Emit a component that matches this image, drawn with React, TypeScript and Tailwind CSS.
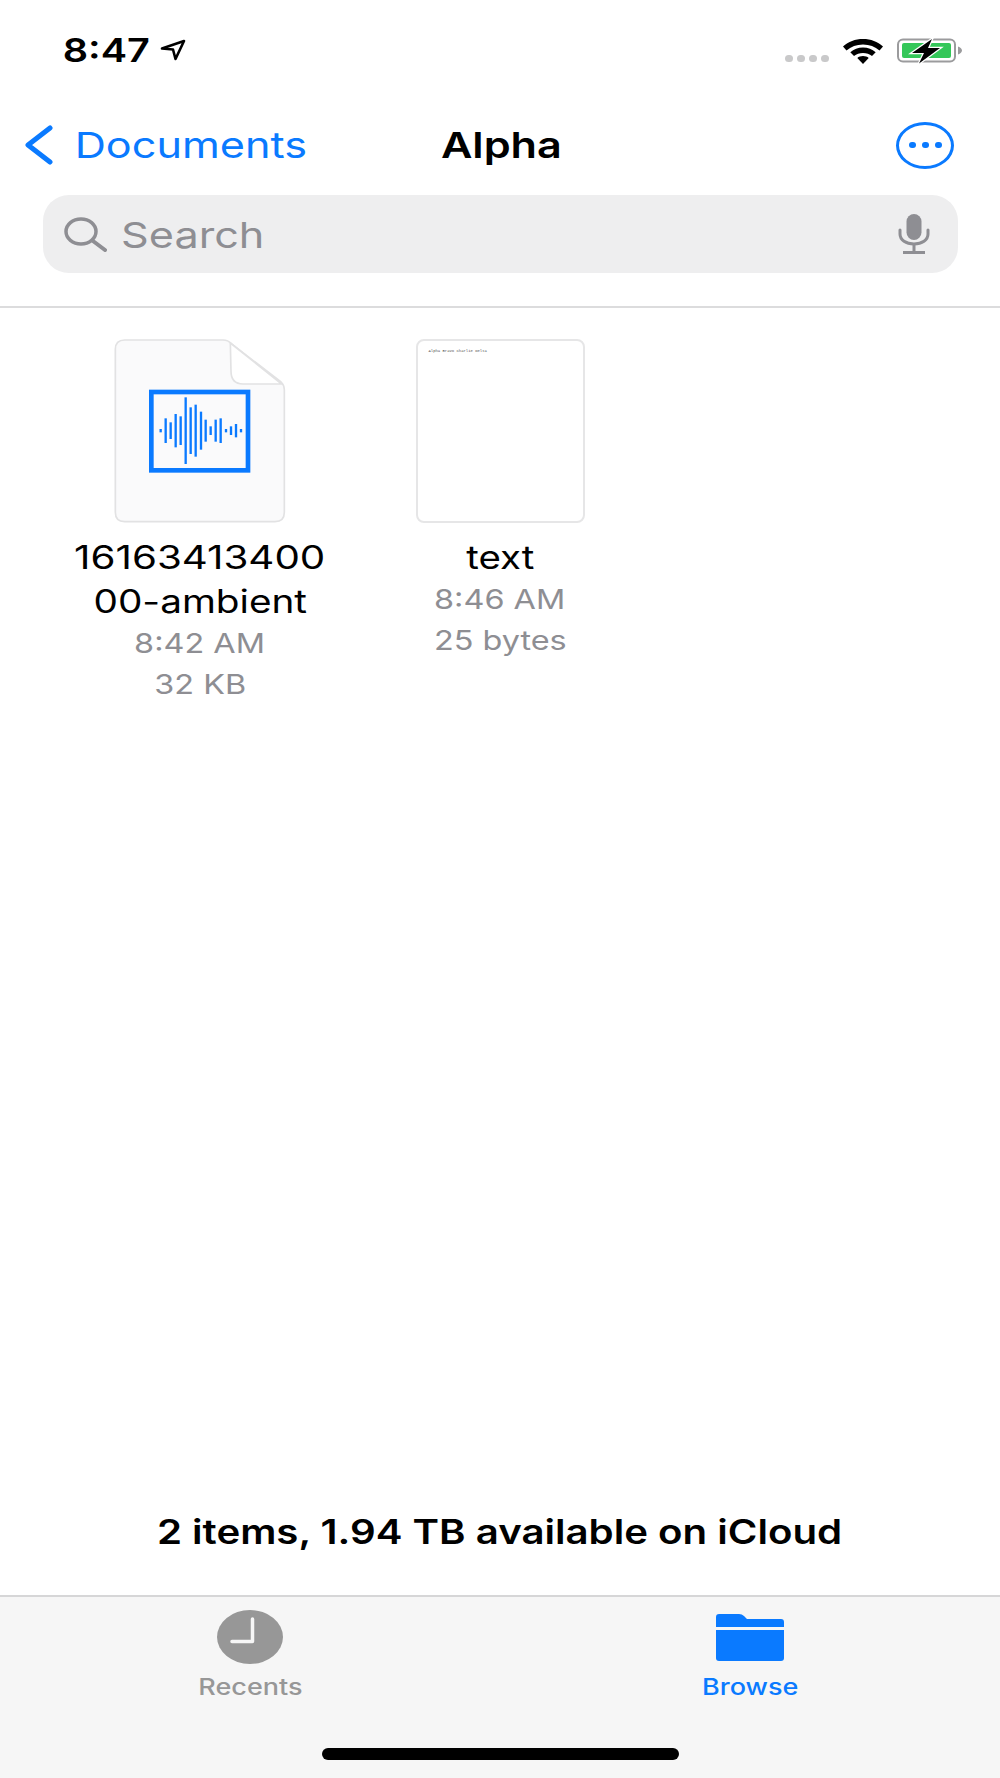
const bars: [number, number][] = [
  [303, 5], [318, 37], [333, 25], [348, 50], [363, 43], [378, 100], [393, 70], [408, 78], [424, 57],
  [438, 33], [453, 13], [468, 33], [483, 37], [499, 5], [514, 13], [529, 20], [544, 5],
];

function AudioFileIcon() {
  return (
    <svg width="172" height="184" viewBox="165 58 512 552" fill="none">
      <path
        d="M195 61H490Q505 61 515 72L664 187Q674 197 674 210V578Q674 606 646 606H195Q167 606 167 578V89Q167 61 195 61Z"
        fill="#fafafb"
        stroke="#e2e2e3"
        strokeWidth="5"
      />
      <path d="M512 70L666 193H550Q514 193 514 155Z" fill="#fff" stroke="#e2e2e3" strokeWidth="5" strokeLinejoin="round" />
      <rect x="275" y="217" width="290" height="235" stroke="#0a7aff" strokeWidth="14" />
      {bars.map(([x, h]) => (
        <rect key={x} x={x - 3.5} y={333 - h} width="7" height={h * 2} fill="#0a7aff" />
      ))}
    </svg>
  );
}

function TextFileIcon() {
  return (
    <div className="h-[184px] w-[169px] rounded-[8px] border-2 border-[#e6e6e7] bg-white pl-[11px] pt-[8px]">
      <p className="font-['Liberation_Mono',monospace] text-[3.9px] leading-[5px] whitespace-nowrap text-[#555555]">
        Alpha Bravo Charlie Delta
      </p>
    </div>
  );
}

function FileItem({ name, time, size, icon }: { name: React.ReactNode; time: string; size: string; icon: React.ReactNode }) {
  return (
    <div className="flex flex-col items-center">
      {icon}
      <div className="mt-[13px] flex flex-col items-center text-[32px] leading-[44px] text-black">{name}</div>
      <div className="-mt-[1px] flex flex-col items-center text-[27px] leading-[41px] text-[#8e8e93]">
        <span className="inline-block scale-x-[1.2] whitespace-nowrap">{time}</span>
        <span className="inline-block scale-x-[1.2] whitespace-nowrap">{size}</span>
      </div>
    </div>
  );
}

export default function App() {
  return (
    <div className="flex h-[1778px] w-[1000px] flex-col bg-white font-[Inter,sans-serif]">
      {/* status bar */}
      <div className="flex h-[100px] shrink-0 items-start justify-between pl-[64px] pr-[38px] pt-[36px]">
        <div className="flex items-center gap-[11px]">
          <div className="flex w-[85px] justify-center">
            <span className="inline-block scale-x-[1.2] text-[33px] leading-[28px] font-semibold text-black">8:47</span>
          </div>
          <svg width="26" height="22" viewBox="0 0 26 22" fill="none">
            <path d="M2 9.500L24 2L15.500 20L13 10.500Z" stroke="#000" strokeWidth="2.600" strokeLinejoin="round" />
          </svg>
        </div>
        <div className="flex items-center">
          <div className="mt-[16px] flex gap-[4px]">
            <div className="h-[7px] w-[8px] rounded-full bg-[#c9c9ca]" />
            <div className="h-[7px] w-[8px] rounded-full bg-[#c9c9ca]" />
            <div className="h-[7px] w-[8px] rounded-full bg-[#c9c9ca]" />
            <div className="h-[7px] w-[8px] rounded-full bg-[#c9c9ca]" />
          </div>
          <svg className="ml-[14px] mt-[2px]" width="40" height="25" viewBox="0 0 40 25">
            <path d="M20 0C12 0 5.500 2.600 0 7.500L3.500 11.500C8 7.500 13.500 5.500 20 5.500C26.500 5.500 32 7.500 36.500 11.500L40 7.500C34.500 2.600 28 0 20 0Z" fill="#000" />
            <path d="M20 8.500C15 8.500 10.800 10.200 7.300 13.200L11 17C13.500 15 16.500 14 20 14C23.500 14 26.500 15 29 17L32.700 13.200C29.200 10.200 25 8.500 20 8.500Z" fill="#000" />
            <path d="M20 17C17.700 17 15.800 17.700 14.300 18.900L20 25L25.700 18.900C24.200 17.700 22.300 17 20 17Z" fill="#000" />
          </svg>
          <svg className="ml-[14px] mt-[2px]" width="65" height="26" viewBox="0 0 65 26">
            <rect x="1" y="1.500" width="57" height="22" rx="5" fill="#fff" stroke="#9b9b9d" strokeWidth="2" />
            <rect x="5" y="5" width="49" height="15" rx="2" fill="#34c759" />
            <path d="M61 8.500C63.500 9.500 65 11 65 12.500C65 14 63.500 15.500 61 16.500Z" fill="#9b9b9d" />
            <path d="M35 1L15 15H27L22 25.500L43 10H31Z" fill="#000" stroke="#fff" strokeWidth="2.500" paintOrder="stroke" />
          </svg>
        </div>
      </div>

      {/* nav */}
      <div className="grid h-[90px] shrink-0 grid-cols-3 items-center pl-[24px] pr-[46px]">
        <div className="flex items-center gap-[23px]">
          <svg width="29" height="40" viewBox="0 0 29 40" fill="none">
            <path d="M26 3L4 20L26 37" stroke="#0a7aff" strokeWidth="5" strokeLinecap="round" strokeLinejoin="round" />
          </svg>
          <div className="flex w-[229px] justify-center">
            <span className="inline-block scale-x-[1.2] whitespace-nowrap text-[36px] leading-[44px] text-[#0a7aff]">Documents</span>
          </div>
        </div>
        <div className="flex justify-center pl-[24px]">
          <span className="inline-block scale-x-[1.2] text-[36px] leading-[44px] font-semibold text-black">Alpha</span>
        </div>
        <div className="flex justify-end">
          <div className="flex h-[47px] w-[58px] items-center justify-center gap-[6px] rounded-[50%] border-[3px] border-[#0a7aff]">
            <div className="h-[6px] w-[7px] rounded-full bg-[#0a7aff]" />
            <div className="h-[6px] w-[7px] rounded-full bg-[#0a7aff]" />
            <div className="h-[6px] w-[7px] rounded-full bg-[#0a7aff]" />
          </div>
        </div>
      </div>

      {/* search */}
      <div className="ml-[43px] mr-[42px] mt-[5px] flex h-[78px] shrink-0 items-center rounded-[26px] bg-[#eeeeef] pl-[21px] pr-[28px]">
        <svg width="43" height="35" viewBox="0 0 43 35" fill="none">
          <ellipse cx="17" cy="14.500" rx="15" ry="12.500" stroke="#8e8e93" strokeWidth="3.500" />
          <path d="M29 24L41 33" stroke="#8e8e93" strokeWidth="4" strokeLinecap="round" />
        </svg>
        <div className="ml-[17px] mt-[2px] flex w-[138px] justify-center">
          <span className="inline-block scale-x-[1.2] text-[36px] leading-[44px] text-[#8e8e93]">Search</span>
        </div>
        <svg className="ml-auto" width="32" height="40" viewBox="0 0 32 40" fill="none">
          <rect x="8.500" y="0" width="15" height="26" rx="7.500" fill="#8e8e93" />
          <path d="M2 16V20C2 26 8 30 16 30C24 30 30 26 30 20V16" stroke="#8e8e93" strokeWidth="3" strokeLinecap="round" />
          <path d="M16 30V38M5 38.500H27" stroke="#8e8e93" strokeWidth="3" />
        </svg>
      </div>

      {/* files */}
      <div className="mt-[33px] flex flex-1 flex-col border-t-2 border-[#dcdcdd] px-[50px]">
        <div className="grid grid-cols-3 pt-[31px]">
          <FileItem
            name={
              <>
                <span className="inline-block scale-x-[1.26] whitespace-nowrap">16163413400</span>
                <span className="inline-block scale-x-[1.21] whitespace-nowrap">00-ambient</span>
              </>
            }
            time="8:42 AM"
            size="32 KB"
            icon={<AudioFileIcon />}
          />
          <FileItem
            name={<span className="inline-block scale-x-[1.2] whitespace-nowrap">text</span>}
            time="8:46 AM"
            size="25 bytes"
            icon={<TextFileIcon />}
          />
        </div>
        <div className="mt-auto flex justify-center pb-[45px]">
          <span className="inline-block scale-x-[1.2] whitespace-nowrap text-[33.5px] leading-[36px] font-semibold text-black">
            2 items, 1.94 TB available on iCloud
          </span>
        </div>
      </div>

      {/* tab bar */}
      <div className="flex h-[183px] shrink-0 flex-col border-t-2 border-[#d6d6d7] bg-[#f6f6f6]">
        <div className="grid grid-cols-2 pt-[13px]">
          <div className="flex flex-col items-center">
            <svg width="66" height="54" viewBox="0 0 66 54">
              <ellipse cx="33" cy="27" rx="33" ry="27" fill="#979797" />
              <path d="M35.500 9V31.500H15" fill="none" stroke="#f6f6f6" strokeWidth="3.500" strokeLinecap="round" strokeLinejoin="round" />
            </svg>
            <span className="mt-[9px] inline-block scale-x-[1.2] text-[22.5px] leading-[28px] font-medium text-[#979797]">Recents</span>
          </div>
          <div className="flex flex-col items-center">
            <div className="flex h-[54px] items-center">
              <svg width="68" height="47" viewBox="0 0 68 47">
                <path d="M0 3Q0 0 3 0H23Q26 0 28 2L31 5H65Q68 5 68 8V13H0Z" fill="#0a7aff" />
                <path d="M0 16H68V44Q68 47 65 47H3Q0 47 0 44Z" fill="#0a7aff" />
              </svg>
            </div>
            <span className="mt-[9px] inline-block scale-x-[1.2] text-[22.5px] leading-[28px] font-medium text-[#0a7aff]">Browse</span>
          </div>
        </div>
        <div className="mx-auto mt-[47px] h-[12px] w-[357px] rounded-full bg-black" />
      </div>
    </div>
  );
}
